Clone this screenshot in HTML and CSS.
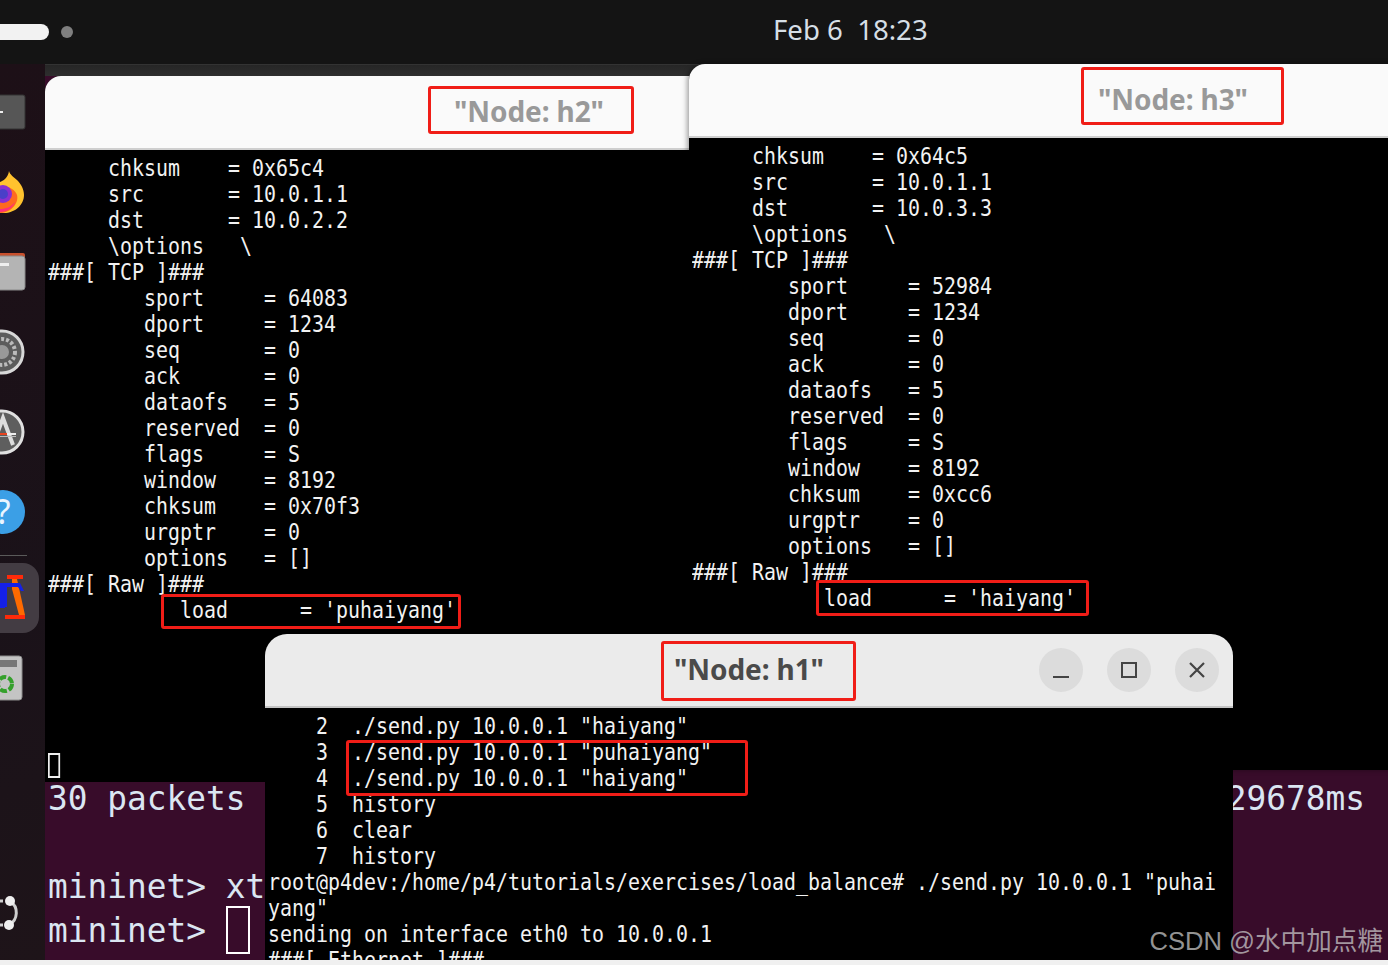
FILE: index.html
```html
<!DOCTYPE html>
<html lang="en">
<head>
<meta charset="utf-8">
<title>Mininet nodes</title>
<link rel="stylesheet" href="styles.css">
</head>
<body>
<div class="screen">
  <header class="topbar">
    <div class="workspaces"><span class="ws-active"></span><span class="ws-dot"></span></div>
    <div class="clock">Feb 6&nbsp; 18:23</div>
  </header>
  <nav class="dock">
    <div class="dock-item dock-first"><svg width="26" height="36" viewBox="0 0 26 36"><rect x="-8" y="1" width="33" height="34" rx="2" fill="#565656" stroke="#333"/><rect x="0" y="17" width="3" height="2" fill="#eee"/></svg></div>
    <div class="dock-item"><svg width="26" height="44" viewBox="0 0 26 44"><path d="M9 1c1 4 5 6 8 9 4 4 7 9 7 15 0 10-9 18-20 18H0V12c3-1 8-4 9-11z" fill="#ffc22e"/><path d="M0 18c6-3 14 0 17 7 2 8-6 18-17 18z" fill="#ff6a1f"/><path d="M0 42c7 0 13-4 15-10-4 5-9 7-15 7z" fill="#ff2f7a"/><circle cx="3" cy="24" r="9" fill="#8b2fd0"/><circle cx="3" cy="24" r="5" fill="#4a3fc8"/></svg></div>
    <div class="dock-item"><svg width="26" height="40" viewBox="0 0 26 40"><rect x="-8" y="1" width="33" height="9" rx="2" fill="#c8502d"/><rect x="-8" y="4" width="33" height="34" rx="3" fill="#b4b4b4" stroke="#888"/><rect x="0" y="11" width="9" height="3" fill="#eee"/></svg></div>
    <div class="dock-item"><svg width="26" height="46" viewBox="0 0 26 46"><circle cx="2" cy="23" r="21" fill="#5c5c5c" stroke="#d8d8d8" stroke-width="3"/><circle cx="2" cy="23" r="13" fill="none" stroke="#bbb" stroke-width="4" stroke-dasharray="3 2"/><circle cx="2" cy="23" r="7" fill="#999"/></svg></div>
    <div class="dock-item"><svg width="26" height="46" viewBox="0 0 26 46"><circle cx="2" cy="23" r="21" fill="#5e5e5e" stroke="#e0e0e0" stroke-width="3"/><path d="M-7 36L3 9l10 27" fill="none" stroke="#ddd" stroke-width="4"/><rect x="0" y="24" width="7" height="2" fill="#e8431f"/><rect x="7" y="24" width="9" height="2" fill="#eee"/><rect x="0" y="27" width="16" height="1" fill="#bbb"/></svg></div>
    <div class="dock-item"><svg width="26" height="46" viewBox="0 0 26 46"><circle cx="3" cy="23" r="22" fill="#3b9fe6"/><text class="help-mark" x="3" y="35">?</text></svg></div>
    <div class="dock-sep"></div>
    <div class="dock-item dock-running"><svg width="26" height="46" viewBox="0 0 26 46"><rect x="7" y="0" width="16" height="4" fill="#ff2a0a"/><path d="M12 4h5l8 36h-6L12 14z" fill="#ff6a00"/><path d="M0 8h20l4 8h-3l-3-4H7v20H0z" fill="#1420e8"/><rect x="0" y="30" width="5" height="3" fill="#1420e8"/><rect x="5" y="40" width="20" height="4" fill="#ff2a0a"/></svg></div>
    <div class="dock-item dock-trash"><svg width="24" height="46" viewBox="0 0 24 46"><rect x="-8" y="1" width="30" height="44" rx="3" fill="#c4c4c4" stroke="#8c8c8c"/><rect x="-8" y="5" width="25" height="7" fill="#777"/><circle cx="5" cy="29" r="7" fill="none" stroke="#35a02c" stroke-width="4" stroke-dasharray="7 2"/></svg></div>
    <div class="dock-spacer"></div>
    <div class="dock-item dock-grid"><svg width="22" height="40" viewBox="0 0 22 40"><path d="M10 8A14 14 0 0 1 9 32" fill="none" stroke="#cfcfcf" stroke-width="3"/><path d="M0 8h3M0 32h3" stroke="#cfcfcf" stroke-width="3"/><circle cx="10" cy="8" r="5" fill="#efefef"/><circle cx="9" cy="32" r="5" fill="#efefef"/></svg></div>
  </nav>

  <section class="window mininet">
    <div class="mini-bar"></div>
    <div class="mini-body">
      <div class="mini-line"><span>30 packets</span><span class="mini-end">29678ms</span></div>
      <div class="mini-line">&nbsp;</div>
      <div class="mini-line">mininet&gt; xterm</div>
      <div class="mini-line"><span>mininet&gt; </span><span class="mini-cursor"></span></div>
    </div>
  </section>

  <section class="window node-h2">
    <div class="titlebar titlebar-white"><h1 class="title title-faint">"Node: h2"</h1></div>
<pre class="term">     chksum    = 0x65c4
     src       = 10.0.1.1
     dst       = 10.0.2.2
     \options   \
###[ TCP ]###
        sport     = 64083
        dport     = 1234
        seq       = 0
        ack       = 0
        dataofs   = 5
        reserved  = 0
        flags     = S
        window    = 8192
        chksum    = 0x70f3
        urgptr    = 0
        options   = []
###[ Raw ]###
           load      = 'puhaiyang'





<span class="term-cursor"> </span></pre>
    <div class="mark mark-h2-title"></div>
    <div class="mark mark-h2-load"></div>
  </section>

  <section class="window node-h3">
    <div class="titlebar titlebar-white"><h1 class="title title-faint">"Node: h3"</h1></div>
<pre class="term">     chksum    = 0x64c5
     src       = 10.0.1.1
     dst       = 10.0.3.3
     \options   \
###[ TCP ]###
        sport     = 52984
        dport     = 1234
        seq       = 0
        ack       = 0
        dataofs   = 5
        reserved  = 0
        flags     = S
        window    = 8192
        chksum    = 0xcc6
        urgptr    = 0
        options   = []
###[ Raw ]###
           load      = 'haiyang'</pre>
    <div class="mark mark-h3-title"></div>
    <div class="mark mark-h3-load"></div>
  </section>

  <section class="window node-h1">
    <div class="titlebar titlebar-grey">
      <h1 class="title">"Node: h1"</h1>
      <div class="controls">
        <button class="ctl" aria-label="Minimize"><svg width="18" height="18" viewBox="0 0 18 18"><path d="M1 16h16" stroke="#444" stroke-width="2"/></svg></button>
        <button class="ctl" aria-label="Maximize"><svg width="18" height="18" viewBox="0 0 18 18"><rect x="2" y="2" width="14" height="14" fill="none" stroke="#444" stroke-width="2"/></svg></button>
        <button class="ctl" aria-label="Close"><svg width="18" height="18" viewBox="0 0 18 18"><path d="M2 2l14 14M16 2L2 16" stroke="#444" stroke-width="2.2"/></svg></button>
      </div>
    </div>
<pre class="term">    2  ./send.py 10.0.0.1 "haiyang"
    3  ./send.py 10.0.0.1 "puhaiyang"
    4  ./send.py 10.0.0.1 "haiyang"
    5  history
    6  clear
    7  history
root@p4dev:/home/p4/tutorials/exercises/load_balance# ./send.py 10.0.0.1 "puhai
yang"
sending on interface eth0 to 10.0.0.1
###[ Ethernet ]###</pre>
    <div class="mark mark-h1-title"></div>
    <div class="mark mark-h1-hist"></div>
  </section>

  <div class="watermark">CSDN @水中加点糖</div>
</div>
</body>
</html>
```

FILE: styles.css
```css
* { box-sizing: border-box; }
html, body { margin: 0; padding: 0; background: #f0f0f0; }
body { height: 965px; overflow: hidden; }

.screen {
  position: relative;
  width: 1388px;
  height: 960px;
  overflow: hidden;
  background: #1b1118;
}

.topbar {
  position: relative;
  height: 64px;
  background: #141414;
}
.workspaces { position: absolute; left: -10px; top: 24px; display: flex; align-items: center; gap: 12px; }
.ws-active { width: 59px; height: 16px; border-radius: 8px; background: #f2f2f2; }
.ws-dot { width: 12px; height: 12px; border-radius: 50%; background: #7f7f7f; }
.clock {
  position: absolute; left: 773px; top: 12px;
  font: 27.6px/34px "Noto Sans", sans-serif;
  color: #d6dfe6;
  white-space: nowrap;
}

.dock {
  position: absolute; left: 0; top: 64px; width: 45px; height: 896px;
  display: flex; flex-direction: column; align-items: flex-start;
  background: linear-gradient(160deg, #1d1017 0%, #1a1219 60%, #1e1419 100%);
}
.dock-item { display: flex; align-items: center; height: 80px; width: 39px; flex: none; }
.dock-first { height: 60px; margin-top: 18px; margin-bottom: 10px; }
.dock-item svg { display: block; overflow: visible; }
.help-mark { font: 400 34px "Noto Sans", sans-serif; fill: #eaf5ff; text-anchor: middle; }
.dock-sep { width: 27px; height: 1px; background: #5a5a5a; margin: 3px 0 7px; flex: none; }
.dock-running { background: #433c43; border-radius: 0 16px 16px 0; height: 70px; }
.dock-trash { height: 46px; margin-top: 22px; }
.dock-spacer { flex: 1; }
.dock-grid { margin-bottom: 27px; height: 40px; }

.window { position: absolute; }
.mininet { left: 45px; top: 64px; width: 1400px; height: 896px; z-index: 1; }
.node-h2 { left: 45px; top: 76px; width: 968px; height: 706px; z-index: 2; background: #000; border-radius: 16px 16px 0 0; }
.node-h3 { left: 689px; top: 64px; width: 968px; height: 706px; z-index: 3; background: #000; border-radius: 16px 16px 0 0; box-shadow: -2px 0 5px rgba(0,0,0,.35); }
.node-h1 { left: 265px; top: 634px; width: 968px; height: 706px; z-index: 4; background: #000; border-radius: 22px 22px 0 0; }

.mini-bar { height: 12px; background: linear-gradient(#262626, #2e2e2e); border-top: 1px solid #333; }
.mini-body {
  height: 884px;
  background: #380c2a;
  padding: 701px 0 0 3px;
  color: #dbe6f2;
  font: 32.8px/44px "DejaVu Sans Mono", monospace;
}
.mini-line { display: flex; height: 44px; width: 1317px; white-space: pre; }
.mini-end { margin-left: auto; }
.mini-cursor { display: block; width: 24px; height: 48px; border: 2px solid #fff; margin-top: -3px; }

.titlebar {
  position: relative;
  display: flex; align-items: center; justify-content: center;
  height: 74px;
  padding-bottom: 2px;
  border-bottom: 2px solid #cfcfcf;
  border-radius: inherit;
  border-bottom-left-radius: 0; border-bottom-right-radius: 0;
}
.titlebar-white { background: #fafafa; }
.titlebar-grey { background: #ebebeb; border-bottom-color: #c4c4c4; }
.title {
  margin: 0;
  font: 700 28px/1 "Noto Sans", sans-serif;
  letter-spacing: -0.1px;
  color: #4a4a4a;
}
.title-faint { color: #999; }
.controls { position: absolute; right: 14px; top: 14px; display: flex; gap: 24px; }
.ctl { width: 44px; height: 44px; border: 0; padding: 0; border-radius: 50%; background: #dcdcdc; display: flex; align-items: center; justify-content: center; }

.term {
  margin: 0 0 0 3px;
  padding: 5px 0 0;
  color: #f2f2f2;
  font: 23px/26px "DejaVu Sans Mono", monospace;
  white-space: pre;
  transform: scaleX(.8666);
  transform-origin: 0 0;
}
.term-cursor { display: inline-block; width: 14px; height: 25px; outline: 2px solid #efefef; outline-offset: -2px; vertical-align: top; }

.mark { position: absolute; border: 3px solid #f01d17; border-radius: 3px; pointer-events: none; }
.mark-h2-title { left: 383px; top: 10px; width: 206px; height: 48px; }
.mark-h2-load { left: 116px; top: 518px; width: 300px; height: 35px; }
.mark-h3-title { left: 392px; top: 3px; width: 203px; height: 58px; }
.mark-h3-load { left: 127px; top: 516px; width: 273px; height: 36px; }
.mark-h1-title { left: 396px; top: 7px; width: 195px; height: 60px; }
.mark-h1-hist { left: 81px; top: 106px; width: 402px; height: 56px; }

.watermark {
  position: absolute; right: 5px; top: 925px; z-index: 5;
  font: 25.6px/32px "Liberation Sans", "Noto Sans CJK SC", sans-serif;
  color: rgba(205,205,205,.72);
  white-space: nowrap;
}
```
